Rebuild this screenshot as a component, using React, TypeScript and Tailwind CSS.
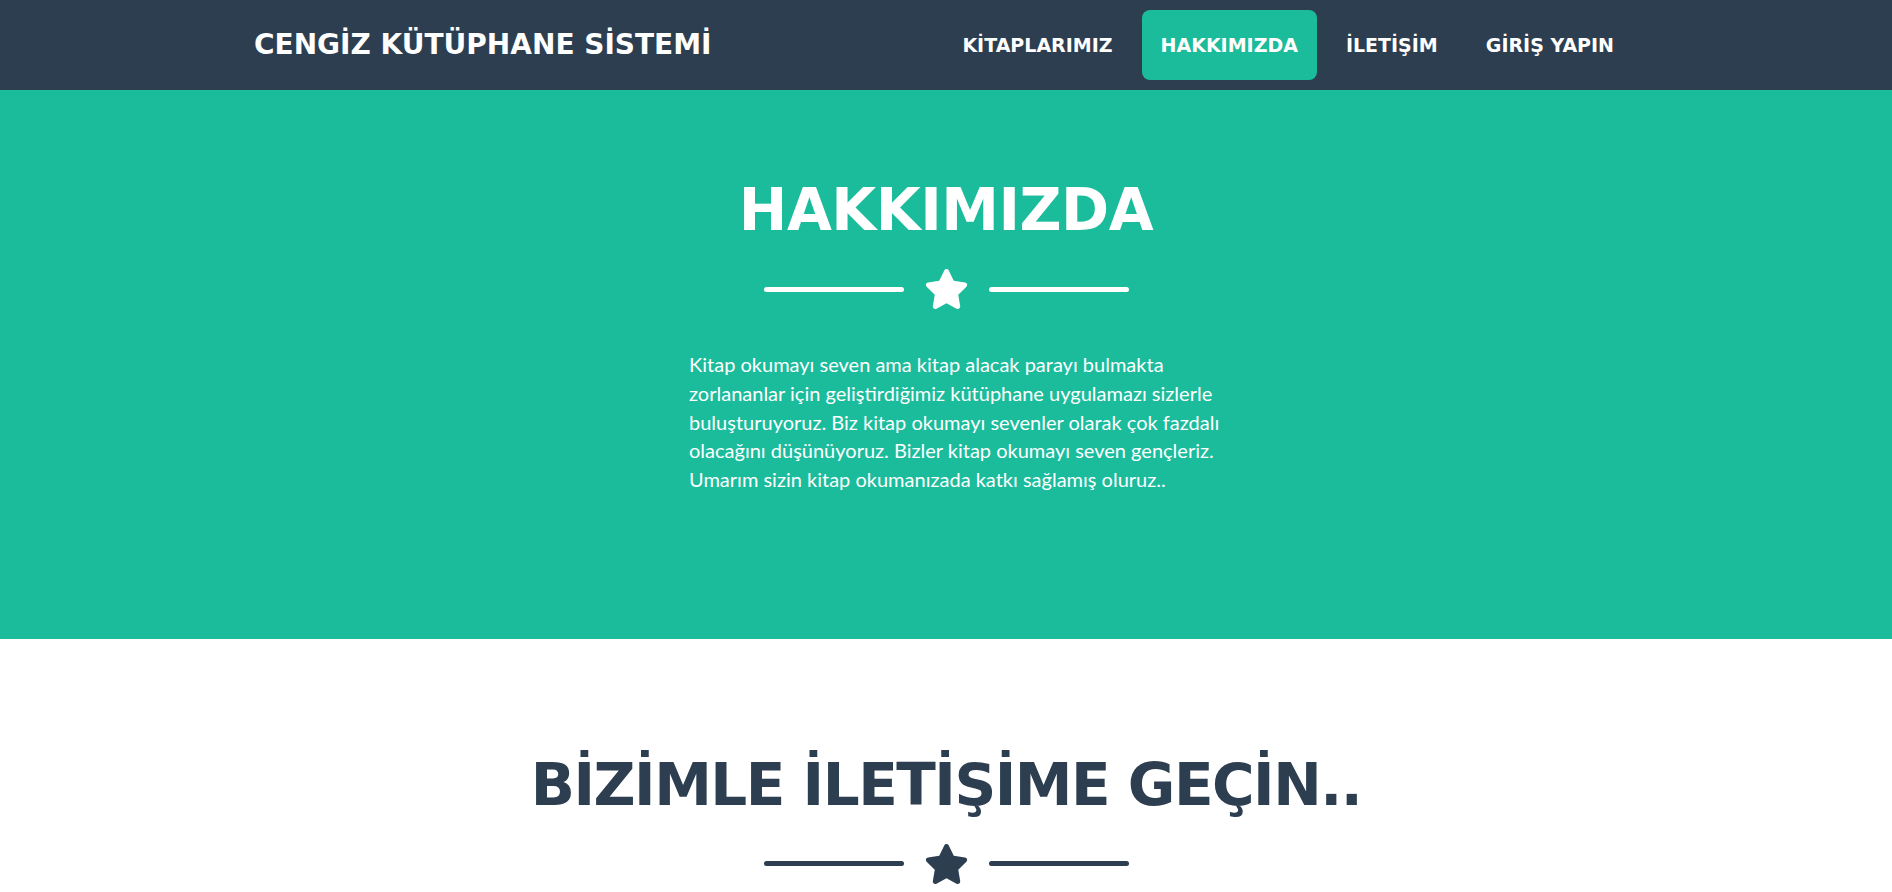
import React from "react";

const STAR =
  "M316.9 18C311.6 7 300.4 0 288.1 0s-23.4 7-28.8 18L195 150.3 51.4 171.5c-12 1.8-22 10.2-25.7 21.7s-.7 24.2 7.9 32.7L137.8 329 113.2 474.7c-2 12 3 24.2 12.9 31.3s23 8 33.8 2.3l128.3-68.5 128.3 68.5c10.8 5.7 23.9 4.9 33.8-2.3s14.9-19.3 12.9-31.3L438.5 329 542.7 225.9c8.6-8.5 11.7-21.2 7.9-32.7s-13.7-19.9-25.7-21.7L381.2 150.3 316.9 18z";

function Divider({ light }: { light: boolean }) {
  const line = light ? "h-[5px] w-[140px] rounded-full bg-white" : "h-[5px] w-[140px] rounded-full bg-[#2c3e50]";
  const star = light ? "h-[40px] w-[45px] text-white" : "h-[40px] w-[45px] text-[#2c3e50]";
  return (
    <div className="flex items-center justify-center gap-5">
      <div className={line} />
      <svg viewBox="0 0 576 512" className={star} fill="currentColor">
        <path d={STAR} />
      </svg>
      <div className={line} />
    </div>
  );
}

const links = [
  { label: "KİTAPLARIMIZ", active: false },
  { label: "HAKKIMIZDA", active: true },
  { label: "İLETİŞİM", active: false },
  { label: "GİRİŞ YAPIN", active: false },
];

export default function App() {
  return (
    <div className="min-h-screen bg-white">
      <nav className="h-[90px] bg-[#2c3e50]">
        <div className="mx-auto flex h-full max-w-[1384px] items-center justify-between">
          <a className="font-['DejaVu_Sans',sans-serif] text-[28px] font-bold leading-none text-white">
            CENGİZ KÜTÜPHANE SİSTEMİ
          </a>
          <ul className="flex items-center">
            {links.map((l) => (
              <li key={l.label} className="mx-[5px]">
                <a
                  className={
                    l.active
                      ? "flex h-[70px] items-center rounded-lg bg-[#1abc9c] px-[19px] font-['DejaVu_Sans',sans-serif] text-[19px] font-bold text-white"
                      : "flex h-[70px] items-center rounded-lg px-[19px] font-['DejaVu_Sans',sans-serif] text-[19px] font-bold text-white"
                  }
                >
                  {l.label}
                </a>
              </li>
            ))}
          </ul>
        </div>
      </nav>

      <section className="bg-[#1abc9c] pt-[91px] pb-[145px]">
        <h1 className="text-center font-['DejaVu_Sans',sans-serif] text-[58px] font-bold leading-[58px] tracking-[-0.5px] text-white">
          HAKKIMIZDA
        </h1>
        <div className="mt-[30px]">
          <Divider light />
        </div>
        <div className="mx-auto mt-[41px] max-w-[1384px]">
          <p className="ml-[435px] w-[555px] font-['Lato',sans-serif] text-[20px] leading-[28.8px] text-white">
            Kitap okumayı seven ama kitap alacak parayı bulmakta zorlananlar için geliştirdiğimiz kütüphane uygulamazı
            sizlerle buluşturuyoruz. Biz kitap okumayı sevenler olarak çok fazdalı olacağını düşünüyoruz. Bizler kitap
            okumayı seven gençleriz. Umarım sizin kitap okumanızada katkı sağlamış oluruz..
          </p>
        </div>
      </section>

      <section className="bg-white pt-[117px] pb-[96px]">
        <h2 className="text-center font-['DejaVu_Sans',sans-serif] text-[58px] font-bold leading-[58px] tracking-[-1.5px] text-[#2c3e50]">
          BİZİMLE İLETİŞİME GEÇİN..
        </h2>
        <div className="mt-[30px]">
          <Divider light={false} />
        </div>
      </section>
    </div>
  );
}
